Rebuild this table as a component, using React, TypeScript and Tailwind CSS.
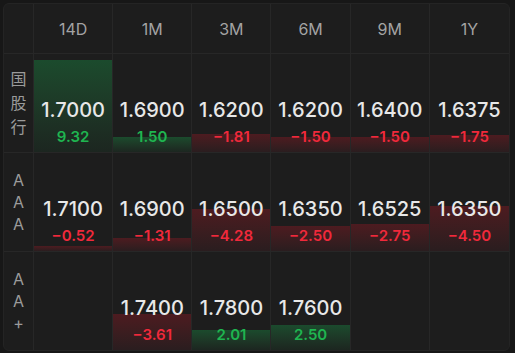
import React from "react";

const tenors = ["14D", "1M", "3M", "6M", "9M", "1Y"];

type Cell = { value: string; change: number } | null;

const rows: { label: string[]; cells: Cell[] }[] = [
  {
    label: ["国", "股", "行"],
    cells: [
      { value: "1.7000", change: 9.32 },
      { value: "1.6900", change: 1.5 },
      { value: "1.6200", change: -1.81 },
      { value: "1.6200", change: -1.5 },
      { value: "1.6400", change: -1.5 },
      { value: "1.6375", change: -1.75 },
    ],
  },
  {
    label: ["A", "A", "A"],
    cells: [
      { value: "1.7100", change: -0.52 },
      { value: "1.6900", change: -1.31 },
      { value: "1.6500", change: -4.28 },
      { value: "1.6350", change: -2.5 },
      { value: "1.6525", change: -2.75 },
      { value: "1.6350", change: -4.5 },
    ],
  },
  {
    label: ["A", "A", "+"],
    cells: [
      null,
      { value: "1.7400", change: -3.61 },
      { value: "1.7800", change: 2.01 },
      { value: "1.7600", change: 2.5 },
      null,
      null,
    ],
  },
];

const font = { fontFamily: "Inter, 'Noto Sans CJK SC', sans-serif" };

function fmt(v: number) {
  const s = Math.abs(v).toFixed(2);
  return v < 0 ? "\u2212" + s : s;
}

function DataCell({ cell, last, bottom }: { cell: Cell; last: boolean; bottom: boolean }) {
  const border = `${last ? "" : "border-r"} ${bottom ? "" : "border-b"}`;
  if (!cell) return <div className={`border-[#272727] ${border}`} />;
  const up = cell.change >= 0;
  return (
    <div className={`relative flex flex-col items-center justify-end pb-[5px] border-[#272727] ${border}`}>
      {/* bar height scales with the change */}
      <div
        className={`absolute left-0 right-0 bottom-0 ${
          up
            ? "bg-gradient-to-b from-[#1b4b2d] to-[#1c2620]"
            : "bg-gradient-to-b from-[#4d1b20] to-[#2a1d1f]"
        }`}
        style={{ height: Math.abs(cell.change) * 9.9 }}
      />
      <div className="relative text-[20px] leading-[24px] font-medium text-[#e8e8e8] mb-[5px]">
        {cell.value}
      </div>
      <div
        className={`relative text-[15px] leading-[20px] font-semibold ${
          up ? "text-[#1fb550]" : "text-[#f0293b]"
        }`}
      >
        {fmt(cell.change)}
      </div>
    </div>
  );
}

export default function App() {
  return (
    <div className="w-[515px] h-[353px] bg-[#171717] pt-[3px] pl-[3px] pr-[5px] pb-[2px]" style={font}>
      <div className="h-full rounded-md bg-[#1d1d1d] border border-[#242424] overflow-hidden grid grid-cols-[30px_repeat(6,1fr)] grid-rows-[50px_99px_99px_98px]">
        <div className="border-r border-b border-[#272727]" />
        {tenors.map((t, i) => (
          <div
            key={t}
            className={`flex items-center justify-center text-[16px] text-[#a3a3a3] border-b border-[#272727] ${
              i < 5 ? "border-r" : ""
            }`}
          >
            {t}
          </div>
        ))}
        {rows.map((r, ri) => (
          <React.Fragment key={ri}>
            <div
              className={`flex flex-col items-center justify-center text-[16px] text-[#9b9b9b] border-r border-[#272727] ${
                ri < 2 ? "border-b" : ""
              } ${ri === 0 ? "leading-[24px]" : "leading-[22px]"}`}
            >
              {r.label.map((c, ci) => (
                <span key={ci}>{c}</span>
              ))}
            </div>
            {r.cells.map((c, ci) => (
              <DataCell key={ci} cell={c} last={ci === 5} bottom={ri === 2} />
            ))}
          </React.Fragment>
        ))}
      </div>
    </div>
  );
}
